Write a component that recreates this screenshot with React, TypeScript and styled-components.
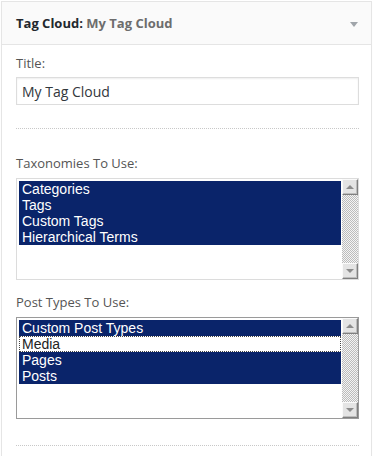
import React from "react";
import styled, { createGlobalStyle } from "styled-components";

const GlobalStyle = createGlobalStyle`
  html, body {
    margin: 0;
    padding: 0;
    background: #fff;
  }
  body {
    font-family: "Open Sans", "Liberation Sans", sans-serif;
    font-size: 13px;
    color: #444;
  }
  * {
    box-sizing: border-box;
  }
`;

interface Option {
  label: string;
  selected: boolean;
  focused?: boolean;
}

const taxonomies: Option[] = [
  { label: "Categories", selected: true },
  { label: "Tags", selected: true },
  { label: "Custom Tags", selected: true },
  { label: "Hierarchical Terms", selected: true },
];

const postTypes: Option[] = [
  { label: "Custom Post Types", selected: true },
  { label: "Media", selected: false, focused: true },
  { label: "Pages", selected: true },
  { label: "Posts", selected: true },
];

function ListBox({ options, active }: { options: Option[]; active?: boolean }) {
  return (
    <Box $active={active}>
      <OptionList>
        {options.map((o) => (
          <OptionRow key={o.label} $selected={o.selected} $focused={o.focused}>
            {o.label}
          </OptionRow>
        ))}
      </OptionList>
      <ScrollBar>
        <ScrollButton>
          <Arrow $up />
        </ScrollButton>
        <ScrollTrack />
        <ScrollButton>
          <Arrow />
        </ScrollButton>
      </ScrollBar>
    </Box>
  );
}

export default function App() {
  return (
    <>
      <GlobalStyle />
      <Widget>
        <WidgetTop>
          <WidgetTitle>
            Tag Cloud: <InstanceName>My Tag Cloud</InstanceName>
          </WidgetTitle>
          <Toggle />
        </WidgetTop>
        <WidgetInside>
          <Label $first>Title:</Label>
          <TextInput defaultValue="My Tag Cloud" />
          <Separator />
          <Label $top={25}>Taxonomies To Use:</Label>
          <ListBox options={taxonomies} />
          <Label $top={13}>Post Types To Use:</Label>
          <ListBox options={postTypes} active />
          <Separator $top={26} />
        </WidgetInside>
      </Widget>
    </>
  );
}

const Widget = styled.div`
  margin: 1px 0 0 1px;
  width: 371px;
  height: 455px;
  border: 1px solid #e5e5e5;
  border-bottom: none;
  background: #fff;
  box-shadow: 0 1px 1px rgba(0, 0, 0, 0.04);
`;

const WidgetTop = styled.div`
  display: flex;
  align-items: center;
  justify-content: space-between;
  height: 43px;
  padding: 0 13px 0 14px;
  background: #fafafa;
  border-bottom: 1px solid #e5e5e5;
`;

const WidgetTitle = styled.h3`
  margin: 0;
  font-size: 13px;
  font-weight: 700;
  line-height: 1;
  color: #23282d;
`;

const InstanceName = styled.span`
  color: #6d6d6d;
`;

const Toggle = styled.span`
  width: 0;
  height: 0;
  border-left: 4.5px solid transparent;
  border-right: 4.5px solid transparent;
  border-top: 5px solid #a0a5aa;
  margin-top: 2px;
`;

const WidgetInside = styled.div`
  padding: 0 12px 0 14px;
`;

const Label = styled.label<{ $first?: boolean; $top?: number }>`
  display: block;
  margin-top: ${(p) => (p.$first ? 9 : p.$top ?? 0)}px;
  margin-bottom: ${(p) => (p.$first ? 5 : 6)}px;
  font-size: 13px;
  line-height: 18px;
  color: #555;
`;

const TextInput = styled.input`
  display: block;
  width: 100%;
  height: 28px;
  margin: 0;
  padding: 0 5px;
  border: 1px solid #ddd;
  box-shadow: inset 0 1px 2px rgba(0, 0, 0, 0.07);
  font-family: "Open Sans", "Liberation Sans", sans-serif;
  font-size: 14px;
  color: #32373c;
  background: #fff;
  outline: none;
`;

const Separator = styled.hr<{ $top?: number }>`
  margin: ${(p) => p.$top ?? 23}px 0 0;
  border: none;
  border-top: 1px dotted #c8c8c8;
  height: 0;
`;

const Box = styled.div<{ $active?: boolean }>`
  display: flex;
  height: 102px;
  border: 1px solid ${(p) => (p.$active ? "#9a9a9a" : "#dcdcdc")};
  background: #fff;
`;

const OptionList = styled.div`
  flex: 1;
  padding: 2px 1px 2px 2px;
`;

const OptionRow = styled.div<{ $selected: boolean; $focused?: boolean }>`
  height: 16px;
  padding: 0 3px;
  font-family: "Liberation Sans", Arial, sans-serif;
  font-size: 14px;
  line-height: 16px;
  white-space: nowrap;
  color: ${(p) => (p.$selected ? "#fff" : "#222")};
  background: ${(p) => (p.$selected ? "#0a246a" : "#fff")};
  outline: ${(p) => (p.$focused ? "1px dotted #444" : "none")};
  outline-offset: -1px;
`;

const ScrollBar = styled.div`
  display: flex;
  flex-direction: column;
  width: 16px;
`;

const ScrollButton = styled.div`
  display: flex;
  align-items: center;
  justify-content: center;
  width: 16px;
  height: 16px;
  background: #e4e4e4;
  border: 1px solid;
  border-color: #fafafa #7f7f7f #7f7f7f #fafafa;
  box-shadow: inset -1px -1px 0 #bdbdbd;
`;

const Arrow = styled.span<{ $up?: boolean }>`
  width: 0;
  height: 0;
  border-left: 4px solid transparent;
  border-right: 4px solid transparent;
  ${(p) =>
    p.$up
      ? "border-bottom: 4px solid #8c8c8c;"
      : "border-top: 4px solid #8c8c8c;"}
`;

const ScrollTrack = styled.div`
  flex: 1;
  background: repeating-conic-gradient(#bcbcbc 0 25%, #f4f4f4 0 50%) 0 0 / 2px 2px;
`;
